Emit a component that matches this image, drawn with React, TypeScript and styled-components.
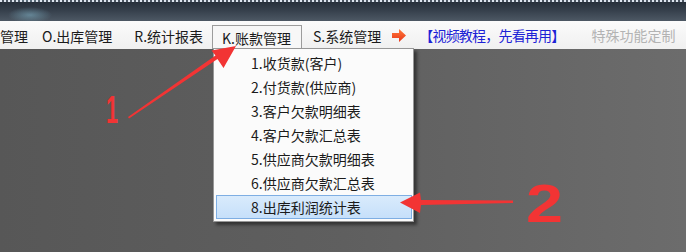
import * as React from "react"
import styled, { createGlobalStyle } from "styled-components"

const GlobalStyle = createGlobalStyle`
  html, body {
    margin: 0;
    padding: 0;
    background: #5e5e5e;
  }
  body {
    font-family: "Noto Sans CJK SC", "Noto Sans", sans-serif;
  }
`

const Screen = styled.div`
  position: relative;
  display: flex;
  flex-direction: column;
  width: 686px;
  height: 252px;
  overflow: hidden;
  background: linear-gradient(90deg, #575757 0%, #5f5f5f 50%, #6c6c6c 100%);
`

const TitleBar = styled.div`
  box-sizing: border-box;
  height: 21px;
  border-top: 2px dotted #dfe6f0;
  background:
    radial-gradient(ellipse 22px 8px at 30px 13px, rgba(130, 180, 200, 0.55), rgba(130, 180, 200, 0) 100%),
    linear-gradient(180deg, #27303b 0%, #36404c 45%, #4d5864 100%);
`

const MenuBar = styled.div`
  display: flex;
  align-items: flex-end;
  height: 28px;
  background: linear-gradient(180deg, #fbfbfb 0%, #f0f0f0 100%);
  font-size: 14px;
  color: #1b1b1b;
  white-space: nowrap;
`

const MenuItem = styled.div<{ $active?: boolean; $cut?: boolean }>`
  box-sizing: border-box;
  display: flex;
  align-items: center;
  height: ${(p) => (p.$active ? "24px" : "28px")};
  padding: ${(p) => (p.$cut ? "0 2px 0 0" : "0 10px")};
  padding-top: 1px;
  border: 1px solid ${(p) => (p.$active ? "#9c9c9c" : "transparent")};
  border-bottom: none;
  background: ${(p) => (p.$active ? "#f7f7f7" : "transparent")};
  ${(p) => p.$cut && "border-left: none;"}
  ${(p) => p.$active && "margin-left: -2px; padding-left: 9px; padding-top: 0;"}
`

const VideoLink = styled.div`
  display: flex;
  align-items: center;
  gap: 12px;
  height: 28px;
  padding-top: 1px;
  color: #1c22d6;
  letter-spacing: -0.8px;
`

const Special = styled.div`
  display: flex;
  align-items: center;
  height: 28px;
  padding: 1px 0 0 27px;
  color: #b3b3b3;
`

const Workspace = styled.div`
  position: relative;
  flex: 1;
`

const Dropdown = styled.div`
  position: absolute;
  left: 213px;
  top: -1px;
  box-sizing: border-box;
  width: 201px;
  padding: 2px 1px 2px 2px;
  background: #fbfbfb;
  border: 1px solid #979797;
  box-shadow: 3px 3px 3px rgba(0, 0, 0, 0.45);
  font-size: 14px;
  color: #1b1b1b;
`

const DropItem = styled.div<{ $hover?: boolean }>`
  box-sizing: border-box;
  display: flex;
  align-items: center;
  height: 24px;
  padding-left: ${(p) => (p.$hover ? "34px" : "35px")};
  white-space: nowrap;
  border: ${(p) => (p.$hover ? "1px solid #7eaee3" : "none")};
  background: ${(p) => (p.$hover ? "linear-gradient(180deg, #d9ebfc 0%, #c6e0fa 100%)" : "transparent")};
`

const Overlay = styled.svg`
  position: absolute;
  left: 0;
  top: 0;
  pointer-events: none;
`

const menus = ["O.出库管理", "R.统计报表", "K.账款管理", "S.系统管理"]

const items = [
  "1.收货款(客户)",
  "2.付货款(供应商)",
  "3.客户欠款明细表",
  "4.客户欠款汇总表",
  "5.供应商欠款明细表",
  "6.供应商欠款汇总表",
  "8.出库利润统计表",
]

const OrangeArrow = () => (
  <svg width="15" height="13" viewBox="0 0 15 13">
    <defs>
      <linearGradient id="oa" x1="0" y1="0" x2="0" y2="1">
        <stop offset="0" stopColor="#ff7a3a" />
        <stop offset="1" stopColor="#e8361a" />
      </linearGradient>
    </defs>
    <polygon points="0,4 7,4 7,0 14,6.5 7,13 7,9 0,9" fill="url(#oa)" />
  </svg>
)

export default function App() {
  return (
    <>
      <GlobalStyle />
      <Screen>
        <TitleBar />
        <MenuBar>
          <MenuItem $cut>管理</MenuItem>
          {menus.map((m) => (
            <MenuItem key={m} $active={m.startsWith("K")}>
              {m}
            </MenuItem>
          ))}
          <VideoLink>
            <OrangeArrow />
            <span>【视频教程，先看再用】</span>
          </VideoLink>
          <Special>特殊功能定制</Special>
        </MenuBar>
        <Workspace>
          <Dropdown>
            {items.map((it, i) => (
              <DropItem key={it} $hover={i === items.length - 1}>
                {it}
              </DropItem>
            ))}
          </Dropdown>
        </Workspace>
        <Overlay width="686" height="252" viewBox="0 0 686 252">
          <g fill="#f23434">
            <text x="106" y="123" fontFamily="Liberation Sans" fontWeight="700" fontSize="38" textLength="12" lengthAdjust="spacingAndGlyphs">
              1
            </text>
            <polygon points="128,117 129,118.5 217.5,59 223.5,68 236,46 211.5,50.5 215.5,55.5" />
            <polygon points="513,200.5 513,203 421,205 420,213 400,202.5 420,192.5 421,200" />
            <text x="526" y="222" fontFamily="Liberation Sans" fontWeight="700" fontSize="54" textLength="37" lengthAdjust="spacingAndGlyphs">
              2
            </text>
          </g>
        </Overlay>
      </Screen>
    </>
  )
}
